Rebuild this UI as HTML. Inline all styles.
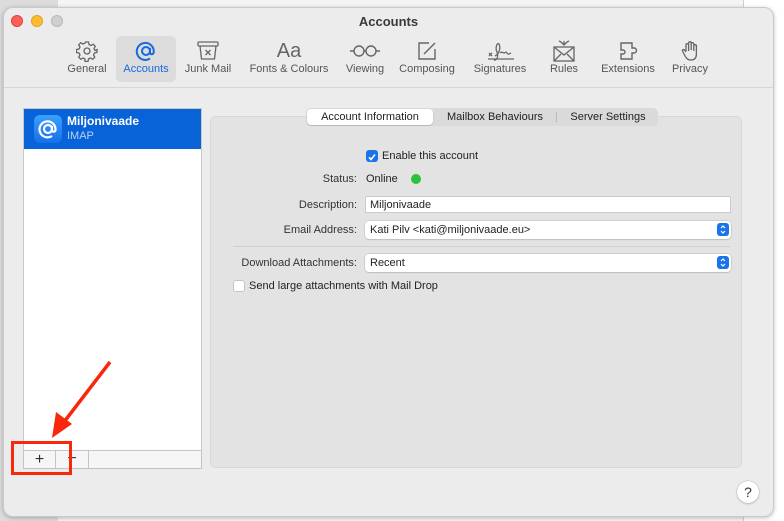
<!DOCTYPE html>
<html><head><meta charset="utf-8"><style>
*{box-sizing:border-box;margin:0;padding:0}
body{width:784px;height:521px;position:relative;overflow:hidden;font-family:"Liberation Sans",sans-serif;background:#fff}
.bgl{position:absolute;left:0;top:0;width:58px;height:521px;background:#dcdcdc}
.bgm{position:absolute;left:58px;top:0;width:686px;height:521px;background:#f4f4f4;border-right:1px solid #d0d0d0}
.win{position:absolute;left:3px;top:7px;width:771px;height:510px;background:#ececec;border-radius:10px;border:1px solid #c9c9c9;box-shadow:0 1px 4px rgba(0,0,0,.25)}
.dot{position:absolute;top:7px;width:12px;height:12px;border-radius:50%}
.title{position:absolute;top:6px;left:0;width:100%;text-align:center;font-size:13px;font-weight:bold;color:#3a3a3a}
.tb{position:absolute;top:28px;height:44px;text-align:center;font-size:11px;color:#555}
.tb svg{display:block;margin:4px auto 0}
.tb span{position:absolute;left:0;right:0;top:27px;white-space:nowrap}
.sep{position:absolute;left:0;right:0;top:79px;border-top:1px solid #d6d6d6}
.list{position:absolute;left:23px;top:108px;width:179px;height:361px;background:#fff;border:1px solid #c8c8c8}
.sel{position:absolute;left:0;top:0;width:177px;height:40px;background:#0863d9}
.btns{position:absolute;left:23px;top:450px;width:179px;height:19px;border:1px solid #c4c4c4;background:#f6f6f6}
.panel{position:absolute;left:210px;top:116px;width:532px;height:352px;background:#e3e3e3;border:1px solid #d8d8d8;border-radius:5px}
.tabs{position:absolute;left:306px;top:108px;width:352px;height:18px;background:#dadada;border-radius:5px;font-size:11px;color:#222}
.lbl{position:absolute;font-size:11px;color:#333;text-align:right}
.txt{position:absolute;font-size:11px;color:#222}
.fld{position:absolute;left:365px;height:17px;width:366px;background:#fff;border:1px solid #ccc;font-size:11px;padding:2px 4px;color:#222}
.pop{position:absolute;left:365px;height:18px;width:366px;background:#fff;border-radius:4px;box-shadow:0 0 0 .5px #bbb,0 1px 1px rgba(0,0,0,.15);font-size:11px;padding:3px 5px;color:#222}
.arr{position:absolute;right:2px;top:2px;width:12px;height:13px;background:#1a73e8;border-radius:3px}
</style></head><body>
<div class="bgl"></div><div class="bgm"></div>
<div class="win">
<div class="dot" style="left:7px;background:#fe5f57;border:.5px solid #e0443e"></div>
<div class="dot" style="left:27px;background:#febc2e;border:.5px solid #dea123"></div>
<div class="dot" style="left:47px;background:#cfcfcf;border:.5px solid #b8b8b8"></div>
<div class="title">Accounts</div>

<div class="tb" style="left:58px;width:50px"><svg width="22" height="22" viewBox="0 0 22 22" fill="none" stroke="#666" stroke-width="1.3"><path d="M9.5 2h3l.5 2.5 2 1 2.2-1.3 2.1 2.1-1.3 2.2 1 2L21 9.5v3l-2.5.5-1 2 1.3 2.2-2.1 2.1-2.2-1.3-2 1-.5 2.5h-3L9 19l-2-1-2.2 1.3-2.1-2.1L4 15l-1-2-2.5-.5v-3L3 9l1-2-1.3-2.2 2.1-2.1L7 4l2-1z"/><circle cx="11" cy="11" r="3"/></svg><span>General</span></div>
<div class="tb" style="left:112px;width:60px;top:28px;height:46px;background:#dcdcdc;border-radius:5px;color:#1769e0"><svg width="24" height="22" viewBox="0 0 24 22" fill="none" stroke="#1769e0" stroke-width="2"><circle cx="12" cy="11" r="4"/><path d="M16 8v4.5c0 2 3 2.5 3.7 0A8.5 8.5 0 1 0 16 18.5"/></svg><span>Accounts</span></div>
<div class="tb" style="left:176px;width:56px"><svg width="24" height="22" viewBox="0 0 24 22" fill="none" stroke="#666" stroke-width="1.3"><rect x="2" y="2" width="20" height="4" rx="1"/><path d="M4 6l1.5 13h13L20 6M9.5 10l5 5M14.5 10l-5 5"/></svg><span>Junk Mail</span></div>
<div class="tb" style="left:240px;width:90px"><div style="font-size:20px;color:#666;height:22px;line-height:22px;margin-top:4px">Aa</div><span>Fonts &amp; Colours</span></div>
<div class="tb" style="left:337px;width:48px"><svg width="32" height="22" viewBox="0 0 32 22" fill="none" stroke="#666" stroke-width="1.4"><circle cx="10" cy="11" r="5"/><circle cx="22" cy="11" r="5"/><path d="M15 11h2M5 11H1M27 11h4"/></svg><span>Viewing</span></div>
<div class="tb" style="left:392px;width:62px"><svg width="22" height="22" viewBox="0 0 22 22" fill="none" stroke="#666" stroke-width="1.4"><path d="M13 3H3v16h16V9"/><path d="M8 14l11-11"/></svg><span>Composing</span></div>
<div class="tb" style="left:466px;width:60px"><svg width="32" height="22" viewBox="0 0 32 22" fill="none" stroke="#666" stroke-width="1.3"><path d="M4 19h26M5 13l3 3M8 13l-3 3M11 16c4-2 6-8 4-12-2-2-4 4-2 8 2 5-1 9-3 8M16 13c2-2 3 0 4 0s2-2 3 0 2 1 4 0"/></svg><span>Signatures</span></div>
<div class="tb" style="left:540px;width:40px"><svg width="24" height="22" viewBox="0 0 24 22" fill="none" stroke="#666" stroke-width="1.3"><rect x="2" y="7" width="20" height="14"/><path d="M2 7l10 8 10-8M2 21l7-7M22 21l-7-7M9 2l3 3 3-3M12 5V1M7 1l2 1M17 1l-2 1"/></svg><span>Rules</span></div>
<div class="tb" style="left:592px;width:64px"><svg width="24" height="22" viewBox="0 0 24 22" fill="none" stroke="#666" stroke-width="1.4"><path d="M5 3h11v5h2a2.5 2.5 0 0 1 0 5h-2v6H5v-5h2a2 2 0 0 0 0-4H5z"/></svg><span>Extensions</span></div>
<div class="tb" style="left:664px;width:44px"><svg width="22" height="22" viewBox="0 0 22 22" fill="none" stroke="#666" stroke-width="1.3"><path d="M7 11V5a1.3 1.3 0 0 1 2.6 0V3a1.3 1.3 0 0 1 2.6 0v1a1.3 1.3 0 0 1 2.6 0v2a1.3 1.3 0 0 1 2.6 0v8c0 4-2 6-5.5 6S7 18 5 14l-1.5-3c-.5-1 1-2 2-1L7 12M9.6 5v6M12.2 4v6M14.8 6v5"/></svg><span>Privacy</span></div>
<div class="sep"></div>
</div>

<div class="list"><div class="sel">
<div style="position:absolute;left:10px;top:6px;width:28px;height:28px;border-radius:6px;background:linear-gradient(#3aa0ff,#1670e8)"><svg width="28" height="28" viewBox="0 0 28 28" fill="none" stroke="#fff" stroke-width="2.2"><circle cx="14" cy="14" r="4"/><path d="M18 11v4c0 2 3 2.5 3.5 0A8 8 0 1 0 18 21"/></svg></div>
<div style="position:absolute;left:43px;top:5px;color:#fff;font-size:12px;font-weight:bold">Miljonivaade</div>
<div style="position:absolute;left:43px;top:21px;color:#b9d2f5;font-size:11px">IMAP</div>
</div></div>
<div class="btns">
<div style="position:absolute;left:0;top:0;width:32px;height:17px;border-right:1px solid #c4c4c4;text-align:center;font-size:16px;line-height:17px;color:#333">+</div>
<div style="position:absolute;left:32px;top:0;width:33px;height:17px;border-right:1px solid #c4c4c4;text-align:center;font-size:16px;line-height:16px;color:#333">−</div>
</div>

<div class="panel"></div>
<div class="tabs">
<div style="position:absolute;left:1px;top:1px;width:126px;height:16px;background:#fff;border-radius:4px;box-shadow:0 .5px 1px rgba(0,0,0,.3);text-align:center;line-height:16px">Account Information</div>
<div style="position:absolute;left:130px;top:0;width:118px;text-align:center;line-height:18px">Mailbox Behaviours</div>
<div style="position:absolute;left:250px;top:4px;height:10px;border-left:1px solid #bbb"></div>
<div style="position:absolute;left:252px;top:0;width:100px;text-align:center;line-height:18px">Server Settings</div>
</div>

<div style="position:absolute;left:366px;top:150px;width:12px;height:12px;border-radius:3px;background:#1a73e8"><svg width="12" height="12" viewBox="0 0 12 12" fill="none" stroke="#fff" stroke-width="1.6"><path d="M3 6.3l2 2.2 4-5"/></svg></div>
<div class="txt" style="left:382px;top:150px">Enable this account</div>
<div class="lbl" style="left:220px;width:137px;top:173px">Status:</div>
<div class="txt" style="left:366px;top:173px">Online</div>
<div style="position:absolute;left:411px;top:174px;width:10px;height:10px;border-radius:50%;background:#2ac23d"></div>
<div class="lbl" style="left:220px;width:137px;top:199px">Description:</div>
<div class="fld" style="top:196px">Miljonivaade</div>
<div class="lbl" style="left:220px;width:137px;top:224px">Email Address:</div>
<div class="pop" style="top:221px">Kati Pilv &lt;kati@miljonivaade.eu&gt;<div class="arr"><svg width="12" height="13" viewBox="0 0 12 13" fill="none" stroke="#fff" stroke-width="1.2"><path d="M4 5l2-2 2 2M4 8l2 2 2-2"/></svg></div></div>
<div style="position:absolute;left:233px;top:246px;width:497px;border-top:1px solid #cfcfcf"></div>
<div class="lbl" style="left:220px;width:137px;top:257px">Download Attachments:</div>
<div class="pop" style="top:254px">Recent<div class="arr"><svg width="12" height="13" viewBox="0 0 12 13" fill="none" stroke="#fff" stroke-width="1.2"><path d="M4 5l2-2 2 2M4 8l2 2 2-2"/></svg></div></div>
<div style="position:absolute;left:233px;top:280px;width:12px;height:12px;border-radius:3px;background:#fff;border:1px solid #c4c4c4"></div>
<div class="txt" style="left:249px;top:280px">Send large attachments with Mail Drop</div>

<div style="position:absolute;left:737px;top:481px;width:22px;height:22px;border-radius:50%;background:#fff;box-shadow:0 0 0 .5px #bbb,0 1px 2px rgba(0,0,0,.2);text-align:center;font-size:14px;line-height:22px;color:#333">?</div>

<div style="position:absolute;left:11px;top:441px;width:61px;height:34px;border:3px solid #f7280c"></div>
<svg style="position:absolute;left:0;top:0" width="784" height="521"><path d="M110 362L64 422" stroke="#f7280c" stroke-width="3.5"/><path d="M52 438L56 412L72 424Z" fill="#f7280c"/></svg>
</body></html>
